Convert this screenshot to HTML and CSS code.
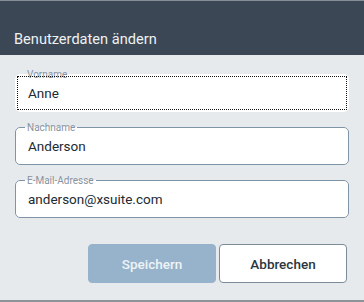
FILE: index.html
```html
<!DOCTYPE html>
<html lang="de">
    <head>
        <meta charset="UTF-8" />
        <title>Benutzerdaten ändern</title>
        <link rel="stylesheet" href="styles.css">
    </head>
    <body>
        <div class="dialog">
            <header class="dialog-header">
                <h1 class="dialog-title">Benutzerdaten ändern</h1>
            </header>

            <form class="dialog-body" id="userForm">
                <div class="field-wrap field-focus">
                    <fieldset class="field">
                        <legend>Vorname</legend>
                        <input type="text" value="Anne" />
                    </fieldset>
                </div>
                <div class="field-wrap">
                    <fieldset class="field">
                        <legend>Nachname</legend>
                        <input type="text" value="Anderson" />
                    </fieldset>
                </div>
                <div class="field-wrap">
                    <fieldset class="field">
                        <legend>E-Mail-Adresse</legend>
                        <input type="text" value="anderson@xsuite.com" />
                    </fieldset>
                </div>

                <div class="dialog-actions">
                    <button type="submit" class="btn btn-save" disabled>Speichern</button>
                    <button type="button" class="btn btn-cancel">Abbrechen</button>
                </div>
            </form>
        </div>
    </body>
</html>
```

FILE: styles.css
```css
body {
    margin: 0;
    font-family: Roboto, 'Liberation Sans', sans-serif;
    background-color: #e6eaed;
}

.dialog {
    width: 364px;
    height: 302px;
    box-sizing: border-box;
    display: flex;
    flex-direction: column;
    background-color: #e6eaed;
    border-top: 1px solid #868e96;
    border-bottom: 2px solid #8c9399;
}

.dialog-header {
    height: 54px;
    background-color: #3b4754;
    display: flex;
    align-items: flex-end;
    padding: 0 14px 7px;
    box-sizing: border-box;
}

.dialog-title {
    margin: 0;
    font-size: 14.6px;
    font-weight: 400;
    color: #eef1f3;
    line-height: 18px;
}

.dialog-body {
    flex: 1;
    display: flex;
    flex-direction: column;
    gap: 10px;
    padding: 14px 15px 0;
}

.field-wrap {
    position: relative;
}

.field {
    margin: 0;
    padding: 0 9px;
    height: 43px;
    box-sizing: border-box;
    border: 1px solid #8094a8;
    border-radius: 5px;
    background-color: #ffffff;
}

.field legend {
    padding: 0 2px;
    font-size: 10px;
    line-height: 11px;
    color: #8894a1;
}

.field input {
    display: block;
    width: 100%;
    height: 27px;
    margin: 0;
    border: none;
    padding: 0 3px;
    box-sizing: border-box;
    font-family: inherit;
    font-size: 13.5px;
    line-height: 27px;
    color: #222a32;
    background: transparent;
    outline: none;
}

.field-focus .field {
    border-color: transparent;
}

.field-focus::after {
    content: "";
    position: absolute;
    top: 7px;
    left: 2px;
    right: 2px;
    bottom: 2px;
    border: 1px dotted #111;
    pointer-events: none;
}

.dialog-actions {
    display: flex;
    justify-content: flex-end;
    gap: 3px;
    margin-top: 16px;
    padding-right: 2px;
}

.btn {
    width: 128px;
    height: 39px;
    border-radius: 4px;
    font-family: inherit;
    font-size: 13.5px;
    font-weight: 500;
    cursor: pointer;
}

.btn-save {
    background-color: #96b3cb;
    border: 1px solid #96b3cb;
    color: #eef3f7;
}

.btn-cancel {
    background-color: #ffffff;
    border: 1px solid #7c8b9a;
    color: #2c3640;
}

.btn-cancel:hover {
    background-color: #f1f4f6;
}
```
